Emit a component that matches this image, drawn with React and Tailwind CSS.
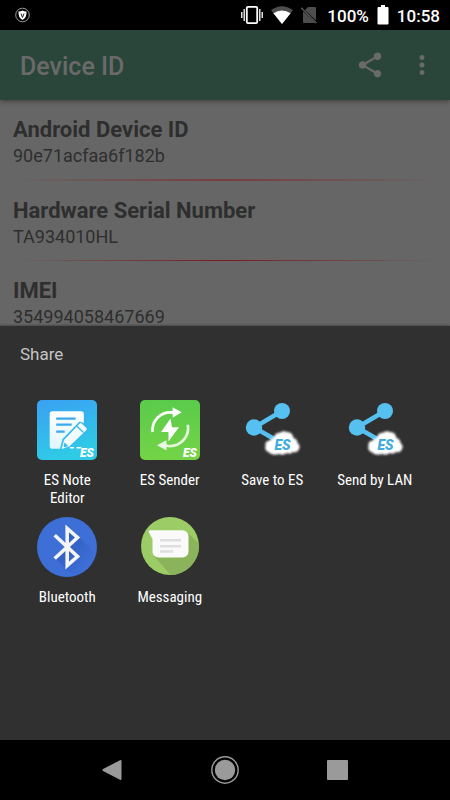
import { MdMoreVert, MdShare } from "react-icons/md";

const deviceInfo = [
  { label: "Android Device ID", value: "90e71acfaa6f182b", line: "h-[2px] via-[#7a3c3e]" },
  { label: "Hardware Serial Number", value: "TA934010HL", line: "h-px via-[#7c1c20]" },
  { label: "IMEI", value: "354994058467669", line: "" },
];

function EsMark({ x, y, size = 12, fill = "#fff" }) {
  return (
    <text
      x={x}
      y={y}
      fill={fill}
      fontFamily="Roboto, sans-serif"
      fontSize={size}
      fontStyle="italic"
      fontWeight="900"
    >
      ES
    </text>
  );
}

function NoteIcon() {
  return (
    <svg viewBox="0 0 60 60" className="size-[60px]" aria-hidden="true">
      <defs>
        <linearGradient id="note-bg" x1="0" y1="0" x2="0.3" y2="1">
          <stop offset="0" stopColor="#3aa0f3" />
          <stop offset="1" stopColor="#2fcbe6" />
        </linearGradient>
        <linearGradient id="note-page" x1="0" y1="0" x2="0" y2="1">
          <stop offset="0" stopColor="#fff" />
          <stop offset="1" stopColor="#e2f5fd" />
        </linearGradient>
      </defs>
      <rect width="60" height="60" rx="5" fill="url(#note-bg)" />
      {/* page, cut off along the pencil */}
      <path
        d="M15.500 11.300h28.500a2.800 2.800 0 0 1 2.800 2.800V23l-4.300-1.500L25.500 39 23 48.700h-7.500a2.800 2.800 0 0 1-2.800-2.800V14.100a2.800 2.800 0 0 1 2.800-2.800z"
        fill="url(#note-page)"
      />
      <path d="M19.200 18.700h19.500M19.200 24.700h15.500M19.200 31.700h8.500" stroke="#3aa9ee" strokeWidth="2.200" />
      <path d="M24.800 48.700l2.200-8.700L42.700 23.500q1-.8 2 0l4.700 4.500q.8 1 0 2L32.500 46.200z" fill="#f4fbff" />
      <path d="M40 26.300l6.500 6.200" stroke="#33b8ea" strokeWidth="1.200" />
      <path d="M26 47.700l1.500-5.200 3.700 3.500z" fill="#33b8ea" />
      <path d="M25 48.700l1-3 2.200 2z" fill="#fff" />
      <path d="M33 47.800h4M39.500 47.800h5" stroke="#fff" strokeWidth="1.500" />
      <EsMark x="43" y="57" />
    </svg>
  );
}

function SenderIcon() {
  return (
    <svg viewBox="0 0 60 60" className="size-[60px]" aria-hidden="true">
      <defs>
        <linearGradient id="sender-bg" x1="0" y1="0" x2="0" y2="1">
          <stop offset="0" stopColor="#5acb4c" />
          <stop offset="1" stopColor="#74d446" />
        </linearGradient>
        <linearGradient id="sender-up" x1="0" y1="1" x2="1" y2="0">
          <stop offset="0" stopColor="#fff" stopOpacity="0.9" />
          <stop offset="1" stopColor="#fff" />
        </linearGradient>
      </defs>
      <rect width="60" height="60" rx="5" fill="url(#sender-bg)" />
      <path d="M12.500 32A18 18 0 0 1 33 12.500" fill="none" stroke="url(#sender-up)" strokeWidth="2.800" />
      <path d="M32.500 7.300l9.200 5-9 5.400z" fill="#fff" />
      <path d="M47.800 24.700A18 18 0 0 1 26 45.500" fill="none" stroke="#fff" strokeOpacity="0.8" strokeWidth="2.800" />
      <path d="M26.500 40.200v10.400L17 45.300z" fill="#fff" fillOpacity="0.85" />
      <path d="M30.500 18.500L21 32h7.500v9.500L39 27.300h-7z" fill="#fff" />
      <EsMark x="43" y="57" />
    </svg>
  );
}

function CloudShareIcon() {
  return (
    <svg viewBox="0 0 60 60" className="size-[60px]" aria-hidden="true">
      <defs>
        <filter id="cloud-haze" x="-20%" y="-20%" width="140%" height="140%">
          <feGaussianBlur stdDeviation="0.900" />
        </filter>
      </defs>
      <path d="M40 11L12 27.500 34 40" fill="none" stroke="#56c0f0" strokeWidth="4.500" />
      <circle cx="40" cy="11" r="8" fill="#56c0f0" />
      <circle cx="12" cy="27.500" r="8.200" fill="#56c0f0" />
      <g filter="url(#cloud-haze)">
        <path
          d="M27 52.500q-5-2-3.500-7-1-4 4-5 1-2 4-2 1-6 7-6 3-2 6-.5 6-.5 7 6 4 1 4 5 3.500 3 1.500 6-1.500 4-6 3-3 3-6 1-4 3-8 1-6 2-10-1.500z"
          fill="#fff"
        />
      </g>
      <EsMark x="32.500" y="50" size={14} fill="#3fabdf" />
    </svg>
  );
}

function BluetoothIcon() {
  return (
    <svg viewBox="0 0 60 60" className="size-[60px]" aria-hidden="true">
      <defs>
        <clipPath id="bt-clip">
          <circle cx="30" cy="30" r="30" />
        </clipPath>
        <linearGradient id="bt-shade" x1="0" y1="0" x2="1" y2="1">
          <stop offset="0.200" stopColor="#264fae" stopOpacity="0.6" />
          <stop offset="0.750" stopColor="#264fae" stopOpacity="0" />
        </linearGradient>
      </defs>
      <circle cx="30" cy="30" r="30" fill="#3d6fd6" />
      <path d="M30 9l12 11 20 20v22H40L18 41l12-11z" fill="url(#bt-shade)" clipPath="url(#bt-clip)" />
      <path
        d="M17.700 18.200L40.500 39.500 30.200 48.500V11.500l10.300 9L17.700 41.500"
        fill="none"
        stroke="#f5f5f5"
        strokeWidth="3.600"
        strokeMiterlimit="10"
      />
    </svg>
  );
}

function MessagingIcon() {
  return (
    <svg viewBox="0 0 60 60" className="size-[60px]" aria-hidden="true">
      <defs>
        <clipPath id="msg-clip">
          <circle cx="30" cy="29" r="29" />
        </clipPath>
      </defs>
      <circle cx="30" cy="29" r="29" fill="#9ccc65" />
      <path d="M47 15l18 18v30H35L14 39z" fill="#8ab35c" clipPath="url(#msg-clip)" />
      <path
        d="M10 13.300H42.500a6 6 0 0 1 6 6V34.500a6 6 0 0 1-6 6H18.500a6 6 0 0 1-6-6V22L8.700 15q-.5-1.700 1.300-1.700z"
        fill="#fafafa"
      />
      <path d="M20 23.300h21M20 29.300h21M20 34.500h13" stroke="#dedede" strokeWidth="2.400" />
    </svg>
  );
}

const targets = [
  { name: "ES Note Editor", Icon: NoteIcon },
  { name: "ES Sender", Icon: SenderIcon },
  { name: "Save to ES", Icon: CloudShareIcon },
  { name: "Send by LAN", Icon: CloudShareIcon },
  { name: "Bluetooth", Icon: BluetoothIcon },
  { name: "Messaging", Icon: MessagingIcon },
];

function StatusBar() {
  return (
    <div className="flex h-[30px] shrink-0 items-center bg-black pr-[10px] pl-[15px] text-white">
      <svg viewBox="0 0 16 16" className="size-4" aria-hidden="true">
        <circle cx="7.500" cy="8" r="6.800" fill="none" stroke="#aaa" strokeWidth="0.900" />
        <path d="M3.500 4.500q2.500 0 4-1 1.500 1 4 1 .5 6-4 8.500-4.500-2.500-4-8.500z" fill="#fff" />
        <path d="M6 6.500l1.500 4 1.500-4" fill="none" stroke="#222" strokeWidth="1" />
      </svg>
      <div className="ml-auto flex items-center">
        <svg viewBox="0 0 22 20" className="h-5 w-[22px]" aria-hidden="true">
          <rect x="5.800" y="1.800" width="10.400" height="16.400" rx="1.200" fill="none" stroke="#fff" strokeWidth="1.800" />
          <path d="M3.200 4v12M18.800 4v12M.8 7v6M21.200 7v6" stroke="#fff" strokeWidth="1.300" />
        </svg>
        <svg viewBox="0 0 22 18" className="ml-2 h-[18px] w-[22px]" aria-hidden="true">
          <path d="M0 4.200Q11-3.500 22 4.200L11 18z" fill="#4d4d4d" />
          <path d="M2.400 7.200Q11 1.800 19.600 7.200L11 18z" fill="#fff" />
        </svg>
        <svg viewBox="0 0 16 18" className="ml-2 h-[18px] w-4" aria-hidden="true">
          <path d="M7 1h7a1 1 0 0 1 1 1v14a1 1 0 0 1-1 1H3a1 1 0 0 1-1-1V6z" fill="#4d4d4d" />
          <path d="M1 2.800l15 14.200" stroke="#000" strokeWidth="2" />
          <path d="M.3 1.800l15.200 15.400" stroke="#555" strokeWidth="1.300" />
        </svg>
        <span className="ml-[10px] pt-px text-[17px] leading-5 font-medium">100%</span>
        <svg viewBox="0 0 12 20" className="ml-2 h-5 w-3" aria-hidden="true">
          <path d="M4 0h4v2h2.500q1 0 1 1v15.500q0 1-1 1h-9q-1 0-1-1V3q0-1 1-1H4z" fill="#fff" />
        </svg>
        <span className="ml-2 pt-px text-[17px] leading-5 font-medium">10:58</span>
      </div>
    </div>
  );
}

function NavBar() {
  return (
    <nav className="grid h-[60px] shrink-0 grid-cols-3 items-center justify-items-center bg-black px-14">
      <button type="button" aria-label="Back">
        <svg viewBox="0 0 20 20" className="size-5 fill-[#9a9a9a]">
          <path d="M18.500 0q1 0 1 1v18q0 1-1 1L1 11q-1.200-1 0-2z" />
        </svg>
      </button>
      <button type="button" aria-label="Home">
        <svg viewBox="0 0 28 28" className="size-7">
          <circle cx="14" cy="14" r="10.200" fill="#9a9a9a" />
          <circle cx="14" cy="14" r="13.200" fill="none" stroke="#9a9a9a" strokeWidth="1.400" />
        </svg>
      </button>
      <button type="button" aria-label="Recent apps">
        <svg viewBox="0 0 21 20" className="h-5 w-[21px] fill-[#9a9a9a]">
          <rect width="21" height="20" rx="1" />
        </svg>
      </button>
    </nav>
  );
}

export default function App() {
  return (
    <div className="flex h-screen flex-col bg-[#666] font-['Roboto',sans-serif]">
      <StatusBar />

      <header className="z-10 flex h-[70px] shrink-0 items-center bg-[#2a463a] pr-[13px] pl-5 text-[#6a6a6a] shadow-[0_2px_4px_rgba(0,0,0,0.3)]">
        <h1 className="flex-1 pt-1 text-[25px] leading-8 font-medium">Device ID</h1>
        <div className="flex gap-[22px]">
          <button type="button" aria-label="Share">
            <MdShare className="size-[30px]" />
          </button>
          <button type="button" aria-label="More options">
            <MdMoreVert className="size-[30px]" />
          </button>
        </div>
      </header>

      <main className="min-h-0 flex-1 overflow-hidden text-[#2e2e2e]">
        {deviceInfo.map(({ label, value, line }) => (
          <section key={label}>
            <div className="px-[13px] pt-[17px] pb-[10px]">
              <h2 className="text-[22px] leading-[26px] font-bold">{label}</h2>
              <p className="text-[18px] leading-[26px]">{value}</p>
            </div>
            {line && <div className={`mx-3 bg-linear-to-r from-transparent to-transparent ${line}`} />}
          </section>
        ))}
      </main>

      {/* Share sheet */}
      <section className="shrink-0 bg-[#303030] pb-[106px] shadow-[0_-1px_2px_rgba(0,0,0,0.3)]">
        <h2 className="px-5 pt-4 text-[17px] leading-6 text-[#c4c4c4]">Share</h2>
        <ul className="grid auto-rows-[117px] grid-cols-4 pt-[34px] pr-6 pl-4">
          {targets.map(({ name, Icon }) => (
            <li key={name} className="flex justify-center">
              <button type="button" className="flex w-20 flex-col items-center gap-[11px]">
                <Icon />
                <span className="font-['Roboto_Condensed','Roboto',sans-serif] text-[15px] leading-[18px] text-white">
                  {name}
                </span>
              </button>
            </li>
          ))}
        </ul>
      </section>

      <NavBar />
    </div>
  );
}
